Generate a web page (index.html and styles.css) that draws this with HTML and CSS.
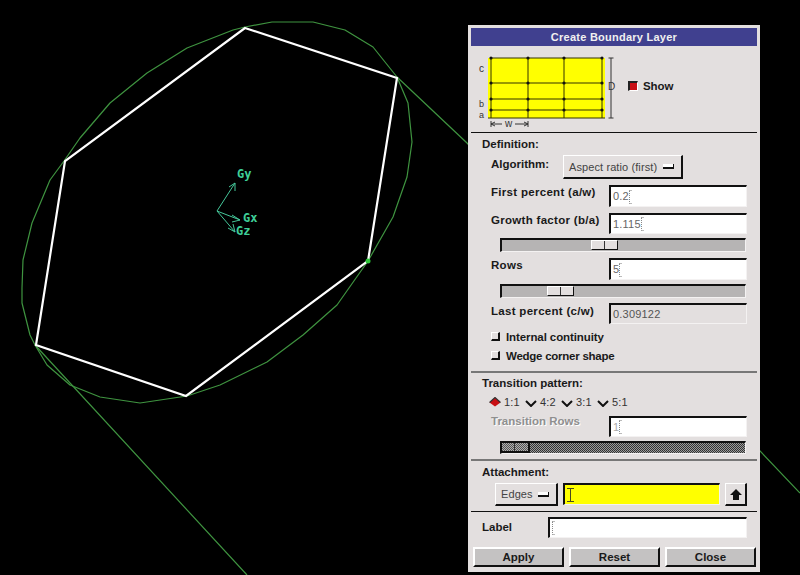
FILE: index.html
```html
<!DOCTYPE html>
<html lang="en">
<head>
<meta charset="utf-8">
<title>Create Boundary Layer</title>
<link rel="stylesheet" href="styles.css">
</head>
<body>
<div class="desktop">
  <svg class="scene" width="800" height="575" viewBox="0 0 800 575">
    <path class="curve" d="M397 77L467 143L800 493M35 345L247 575"/>
    <path class="curve" d="M22 288L23 260L32 223L50 180L64 161L80 138L110 103L147 73L187 48L233 30L245 27L272 22L313 22L345 30L373 47L397 77L408 103L412 142L407 177L393 217L368 261L337 305L303 335L267 362L220 385L187 396L140 403L100 397L70 385L47 365L35 345L30 335L22 303Z"/>
    <path class="edge" d="M245 28L397 78L368 261L186 396L36 345L65 161Z"/>
    <circle class="node" cx="368" cy="261" r="2.5"/>
    <path class="axis" d="M217 211L235 183M229 187L235 183L235 191M217 211L240 220M232 215L240 220L232 222M217 211L235 232M228 228L235 232L233 224"/>
    <text class="axis-label" x="237" y="178">Gy</text>
    <text class="axis-label" x="243" y="222">Gx</text>
    <text class="axis-label" x="236" y="235">Gz</text>
  </svg>

  <section class="panel">
    <header class="title">Create Boundary Layer</header>

    <div class="preview">
      <svg class="diagram" width="150" height="86" viewBox="0 0 150 86">
        <rect class="dg-fill" x="17" y="12" width="117" height="60"/>
        <path class="dg-line" d="M20 12H131M20 37H131M20 53H131M20 64H131M17 72H134M20 12V72M57 12V72M93 12V72M131 12V72"/>
        <g class="dg-dots">
          <circle cx="20" cy="12" r="1.6"/><circle cx="57" cy="12" r="1.6"/><circle cx="93" cy="12" r="1.6"/><circle cx="131" cy="12" r="1.6"/>
          <circle cx="20" cy="37" r="1.6"/><circle cx="57" cy="37" r="1.6"/><circle cx="93" cy="37" r="1.6"/><circle cx="131" cy="37" r="1.6"/>
          <circle cx="20" cy="53" r="1.6"/><circle cx="57" cy="53" r="1.6"/><circle cx="93" cy="53" r="1.6"/><circle cx="131" cy="53" r="1.6"/>
          <circle cx="20" cy="64" r="1.6"/><circle cx="57" cy="64" r="1.6"/><circle cx="93" cy="64" r="1.6"/><circle cx="131" cy="64" r="1.6"/>
        </g>
        <path class="dg-dim" d="M140 12V72M137.500 12H142.500M137.500 72H142.500M20 75V81M57 75V81M20 78H31M20 78L24 76M20 78L24 80M44 78H57M57 78L53 76M57 78L53 80"/>
        <text class="dg-text" x="8" y="26">c</text>
        <text class="dg-text dg-small" x="8" y="61">b</text>
        <text class="dg-text dg-small" x="8" y="72">a</text>
        <text class="dg-text" x="137" y="44">D</text>
        <text class="dg-text" x="34" y="81">w</text>
      </svg>
      <span class="toggle"></span>
      <span class="label show-label">Show</span>
    </div>

    <div class="sep"></div>
    <h2 class="heading heading-def">Definition:</h2>

    <div class="row row-alg">
      <span class="label label-alg">Algorithm:</span>
      <button class="option option-alg">Aspect ratio (first)<i class="bar"></i></button>
    </div>

    <div class="row row-field mt6 h22">
      <span class="label label-field">First percent (a/w)</span>
      <div class="field">0.2<i class="caret"></i></div>
    </div>
    <div class="row row-field mt6 h21">
      <span class="label label-field">Growth factor (b/a)</span>
      <div class="field">1.115<i class="caret"></i></div>
    </div>
    <div class="slider mt4"><div class="thumb thumb-growth"></div></div>
    <div class="row row-field mt6 h22">
      <span class="label label-field">Rows</span>
      <div class="field">5<i class="caret"></i></div>
    </div>
    <div class="slider mt4"><div class="thumb thumb-rows"></div></div>
    <div class="row row-field mt5 h21">
      <span class="label label-field label-last">Last percent (c/w)</span>
      <div class="field field-readonly">0.309122</div>
    </div>

    <div class="row row-check first-check"><i class="check"></i><span class="label label-check">Internal continuity</span></div>
    <div class="row row-check"><i class="check"></i><span class="label label-check">Wedge corner shape</span></div>

    <div class="sep sep-gray mt6"></div>
    <h2 class="heading heading-trans">Transition pattern:</h2>

    <div class="row row-radio">
      <svg class="radio" width="12" height="10" viewBox="0 0 12 10"><path class="radio-on" d="M0.500 5.500L6 0.500L11.500 5.500L6 9.500Z"/><path class="radio-top" d="M0.500 5.500L6 0.500L11.500 5.500"/></svg>
      <span class="radio-text">1:1</span>
      <svg class="radio" width="12" height="10" viewBox="0 0 12 10"><path class="radio-off" d="M1 4L6 9L11 4"/></svg>
      <span class="radio-text">4:2</span>
      <svg class="radio" width="12" height="10" viewBox="0 0 12 10"><path class="radio-off" d="M1 4L6 9L11 4"/></svg>
      <span class="radio-text">3:1</span>
      <svg class="radio" width="12" height="10" viewBox="0 0 12 10"><path class="radio-off" d="M1 4L6 9L11 4"/></svg>
      <span class="radio-text">5:1</span>
    </div>

    <div class="row row-field mt5 h21">
      <span class="label label-field label-disabled">Transition Rows</span>
      <div class="field field-disabled">1<i class="caret"></i></div>
    </div>
    <div class="slider slider-disabled mt4"><div class="thumb thumb-disabled"></div></div>

    <div class="sep sep-gray mt5"></div>
    <h2 class="heading heading-att">Attachment:</h2>

    <div class="row row-attach">
      <button class="option option-edges">Edges<i class="bar"></i></button>
      <div class="field field-yellow">
        <svg class="ibeam" width="7" height="14" viewBox="0 0 7 14"><path d="M0 0.500H7M3.500 0.500V13.500M0 13.500H7"/></svg>
      </div>
      <button class="arrow-btn">
        <svg width="12" height="11" viewBox="0 0 12 11"><path d="M6 0L12 6H9V11H3V6H0Z"/></svg>
      </button>
    </div>

    <div class="sep mt5"></div>

    <div class="row row-label">
      <span class="label label-name">Label</span>
      <div class="field"><i class="caret"></i></div>
    </div>

    <div class="actions">
      <button class="action">Apply</button>
      <button class="action">Reset</button>
      <button class="action">Close</button>
    </div>
  </section>
</div>
</body>
</html>
```

FILE: styles.css
```css
* { box-sizing: border-box; }
html, body { margin: 0; padding: 0; background: #000; }
body { overflow: hidden; }

.desktop { position: relative; width: 800px; height: 575px; background: #000; overflow: hidden; }

.scene { position: absolute; left: 0; top: 0; }
.curve { fill: none; stroke: #3f9440; stroke-width: 1.200; stroke-linejoin: round; }
.edge { fill: none; stroke: #fff; stroke-width: 2.200; stroke-linejoin: miter; }
.node { fill: #2fc83a; }
.axis { fill: none; stroke: #45c79a; stroke-width: 1; }
.axis-label { font: bold 12px "DejaVu Sans Mono", monospace; fill: #3fcf98; }

.panel {
  position: absolute; left: 468px; top: 25px; width: 292px; height: 547px;
  padding: 3px; background: #e3dfdf;
  display: flex; flex-direction: column;
  font-family: "Liberation Sans", Arial, sans-serif; color: #111;
}

.title {
  height: 18px; flex: none; background: #40408f; color: #f0f0f0;
  font-size: 11px; font-weight: bold; line-height: 18px; text-align: center; letter-spacing: 0.250px;
}

.preview { height: 86px; flex: none; display: flex; align-items: center; }
.diagram { flex: none; }
.dg-fill { fill: #ffff00; }
.dg-line { fill: none; stroke: #333300; stroke-width: 1; }
.dg-dots { fill: #111; }
.dg-dim { fill: none; stroke: #333; stroke-width: 1; }
.dg-text { font: 10px "Liberation Sans", Arial, sans-serif; fill: #333; }
.dg-small { font-size: 9px; }

.toggle {
  width: 10px; height: 10px; margin: 0 0 6px 7px; flex: none; background: #c80f14;
  border-top: 2px solid #222; border-left: 2px solid #222;
  border-right: 1px solid #fff; border-bottom: 1px solid #fff;
}
.show-label { margin: 0 0 6px 5px; letter-spacing: -0.100px; }

.sep { height: 1px; flex: none; background: #111; }
.sep-gray { height: 2px; background: #777; }

.label { font-size: 11.500px; font-weight: bold; line-height: 14px; white-space: nowrap; color: #1a1a1a; }

.heading { margin: 0; padding-left: 11px; font-size: 11.500px; font-weight: bold; color: #1a1a1a; flex: none; }
.heading-def { height: 22px; line-height: 22px; }
.heading-trans { height: 20px; line-height: 20px; }
.heading-att { height: 22px; line-height: 22px; }

.row { display: flex; flex: none; padding-left: 20px; }
.row-alg { height: 24px; align-items: flex-start; }
.label-alg { width: 72px; margin-top: 2px; }

.mt4 { margin-top: 4px; }
.mt5 { margin-top: 5px; }
.mt6 { margin-top: 6px; }
.h21 { height: 21px; }
.h22 { height: 22px; }

.label-field { width: 118px; flex: none; letter-spacing: 0.300px; }
.label-last { margin-top: 1px; }
.label-disabled { color: #8f8f8f; text-shadow: 1px 1px 0 #fff; margin-top: -2px; letter-spacing: 0; height: 16px; }

.field {
  width: 138px; height: 100%; flex: none; background: #fff; color: #666;
  border-top: 2px solid #111; border-left: 2px solid #111;
  border-right: 1px solid #f4f2f2; border-bottom: 1px solid #f4f2f2;
  font-size: 11px; letter-spacing: 0.200px; line-height: 19px; padding-left: 2px;
  display: flex; align-items: center;
}
.field-readonly { background: #e3dfdf; color: #555; padding-left: 2px; }
.field-disabled { color: #aaa; }
.caret {
  display: inline-block; width: 3px; height: 14px; margin-left: 0;
  border-left: 1px dotted #888; border-top: 1px solid #bbb; border-bottom: 1px solid #bbb;
}

.option {
  flex: none; display: flex; align-items: center; justify-content: space-between;
  font-family: inherit; font-size: 11px; letter-spacing: 0.100px; color: #444;
  background: #e3dfdf; padding: 0 7px 0 5px;
  border-top: 1px solid #fff; border-left: 1px solid #fff;
  border-right: 2px solid #111; border-bottom: 2px solid #111;
}
.option-alg { width: 120px; height: 24px; }
.option-edges { width: 63px; height: 23px; margin-left: 4px; }
.bar { display: block; width: 11px; height: 5px; background: #fff; border-bottom: 2px solid #111; border-right: 1px solid #111; }

.slider {
  width: 246px; height: 14px; margin-left: 29px; flex: none; background: #b6b4b4; display: flex;
  border-top: 2px solid #111; border-left: 2px solid #111;
  border-right: 1px solid #f4f2f2; border-bottom: 1px solid #f4f2f2;
}
.thumb {
  width: 27px; height: 10px; background: #e3dfdf;
  border-right: 1px solid #111; border-bottom: 1px solid #111;
  border-top: 1px solid #fff; border-left: 1px solid #fff;
  position: relative;
}
.thumb::after { content: ""; position: absolute; left: 12px; top: 0; width: 1px; height: 100%; background: #333; }
.thumb-growth { margin-left: 89px; }
.thumb-rows { margin-left: 45px; }

.slider-disabled {
  height: 13px;
  background: repeating-conic-gradient(#333 0 25%, #9a9a9a 0 50%) 0 0 / 2px 2px;
}
.thumb-disabled {
  width: 28px; height: 10px; margin-left: 0;
  background: repeating-conic-gradient(#555 0 25%, #b0b0b0 0 50%) 0 0 / 2px 2px;
  border-top: 0; border-left: 0; border-right: 2px solid #111; border-bottom: 2px solid #111;
}

.row-check { height: 19px; align-items: center; gap: 6px; }
.first-check { margin-top: 3px; }
.label-check { letter-spacing: -0.100px; }
.row-check + .row-check .label-check { letter-spacing: -0.250px; }
.check {
  display: block; width: 9px; height: 9px; flex: none; background: #e3dfdf;
  border-top: 1px solid #fff; border-left: 1px solid #fff;
  border-right: 2px solid #111; border-bottom: 2px solid #111;
}

.row-radio { height: 18px; padding-left: 18px; align-items: center; }
.radio { flex: none; margin-right: 3px; }
.radio-on { fill: #c80f14; }
.radio-top { fill: none; stroke: #333; stroke-width: 1.200; }
.radio-off { fill: none; stroke: #111; stroke-width: 2; }
.radio-text { font-size: 11px; color: #333; width: 21px; letter-spacing: 0.200px; }

.row-attach { height: 23px; align-items: flex-start; gap: 5px; }
.field-yellow { width: 157px; height: 22px; background: #ffff00; padding-left: 2px; }
.ibeam { flex: none; }
.ibeam path { fill: none; stroke: #4a4a20; stroke-width: 1; }
.arrow-btn {
  width: 22px; height: 23px; flex: none; padding: 0; background: #e3dfdf;
  display: flex; align-items: center; justify-content: center;
  border-top: 1px solid #fff; border-left: 1px solid #fff;
  border-right: 2px solid #111; border-bottom: 2px solid #111;
}
.arrow-btn path { fill: #111; }

.row-label { height: 21px; margin-top: 5px; padding-left: 11px; }
.label-name { width: 66px; flex: none; line-height: 21px; }
.row-label .field { width: 199px; }

.actions { display: flex; gap: 5px; padding-left: 2px; margin-top: 9px; height: 20px; flex: none; }
.action {
  width: 91px; height: 20px; padding: 0; background: #c4c2c2; color: #1a1a1a;
  font-family: inherit; font-size: 11.500px; font-weight: bold;
  border-top: 2px solid #fff; border-left: 2px solid #fff;
  border-right: 2px solid #111; border-bottom: 2px solid #111;
}
```
